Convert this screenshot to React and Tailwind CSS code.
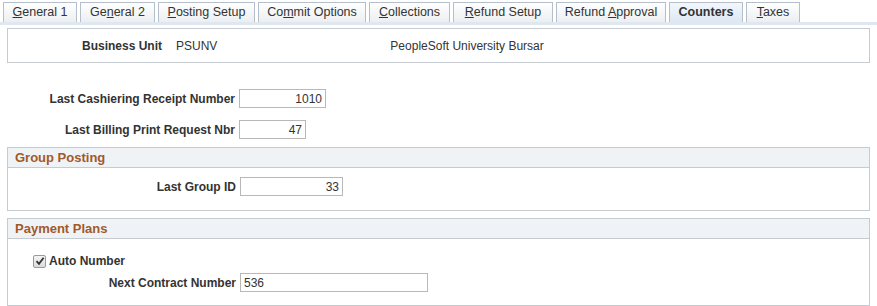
const tabs = [
  { label: 'General 1', u: 0, w: 74 },
  { label: 'General 2', u: 2, w: 75 },
  { label: 'Posting Setup', u: 0, w: 97 },
  { label: 'Commit Options', u: 2, w: 108 },
  { label: 'Collections', u: 0, w: 81 },
  { label: 'Refund Setup', u: 0, w: 100 },
  { label: 'Refund Approval', u: 7, w: 110 },
  { label: 'Counters', u: -1, w: 74, active: true },
  { label: 'Taxes', u: 0, w: 54 },
]

function Tab({ tab }) {
  const text =
    tab.u < 0 ? (
      tab.label
    ) : (
      <>
        {tab.label.slice(0, tab.u)}
        <span className="underline">{tab.label[tab.u]}</span>
        {tab.label.slice(tab.u + 1)}
      </>
    )
  return (
    <div
      style={{ width: tab.w }}
      className={
        'h-[20px] flex items-center justify-center border border-b-0 border-[#b4bfcb] text-[12.5px] text-[#333] ' +
        (tab.active
          ? 'bg-gradient-to-b from-[#f3f7fc] to-[#dde8f5] font-bold'
          : 'bg-gradient-to-b from-white to-[#eceef1]')
      }
    >
      <span className="whitespace-pre">{text}</span>
    </div>
  )
}

function Field({ label, value, w, left, labelW = 'w-[236px]' }) {
  return (
    <div className="flex items-center">
      <div className={labelW + ' text-right pr-[4px] font-bold text-[12px] text-[#333]'}>{label}</div>
      <div
        style={{ width: w }}
        className={
          'h-[19px] border border-[#b8b8b8] bg-white text-[12px] text-[#333] flex items-center px-[3px] ' +
          (left ? 'justify-start px-[2px]' : 'justify-end')
        }
      >
        {value}
      </div>
    </div>
  )
}

function Section({ title, children, h }) {
  return (
    <div className="mx-[7px] border border-[#c6cbd1]" style={{ height: h }}>
      <div className="h-[20px] bg-[#f0f3f5] border-b border-[#c6cbd1] flex items-center pl-[7px] font-bold text-[13px] text-[#a0592a]">
        {title}
      </div>
      {children}
    </div>
  )
}

export default function App() {
  return (
    <div className="w-[877px] h-[306px] bg-white overflow-hidden" style={{ fontFamily: '"Liberation Sans", Arial, sans-serif' }}>
      <div className="pt-[2px] pl-[3px] flex gap-[3px]">
        {tabs.map((t) => (
          <Tab key={t.label} tab={t} />
        ))}
      </div>
      <div className="h-[3px] bg-[#dfe7f1]" />

      <div className="mt-[3px] mx-[7px] h-[35px] border border-[#c6cbd1] flex items-center text-[12px] text-[#333]">
        <span className="ml-[74px] font-bold">Business Unit</span>
        <span className="ml-[14px]">PSUNV</span>
        <span className="ml-[173px]">PeopleSoft University Bursar</span>
      </div>

      <div className="mt-[26px] flex flex-col gap-[12px]">
        <Field label="Last Cashiering Receipt Number" value="1010" w={87} labelW="w-[239px]" />
        <Field label="Last Billing Print Request Nbr" value="47" w={67} labelW="w-[239px]" />
      </div>

      <div className="mt-[8px]">
        <Section title="Group Posting" h={64}>
          <div className="mt-[9px]">
            <Field label="Last Group ID" value="33" w={103} labelW="w-[232px]" />
          </div>
        </Section>
      </div>

      <div className="mt-[7px]">
        <Section title="Payment Plans" h={88}>
          <div className="mt-[13px] ml-[25px] flex items-center gap-[3px] font-bold text-[12px] text-[#333]">
            <span className="w-[13px] h-[13px] border border-[#9a9a9a] rounded-[2px] bg-gradient-to-b from-[#f4f4f4] to-[#dcdcdc] flex items-center justify-center">
              <svg width="10" height="10" viewBox="0 0 10 10">
                <path d="M1.5 5.2 L4 7.8 L8.6 1.8" fill="none" stroke="#333" strokeWidth="1.8" />
              </svg>
            </span>
            <span>Auto Number</span>
          </div>
          <div className="mt-[3px]">
            <Field label="Next Contract Number" value="536" w={188} left labelW="w-[232px]" />
          </div>
        </Section>
      </div>
    </div>
  )
}
